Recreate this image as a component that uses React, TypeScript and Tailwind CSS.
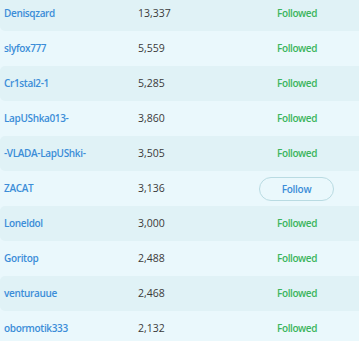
import React from "react";

const rows: { name: string; count: string; followed: boolean }[] = [
  { name: "Denisqzard", count: "13,337", followed: true },
  { name: "slyfox777", count: "5,559", followed: true },
  { name: "Cr1stal2-1", count: "5,285", followed: true },
  { name: "LapUShka013-", count: "3,860", followed: true },
  { name: "-VLADA-LapUShki-", count: "3,505", followed: true },
  { name: "ZACAT", count: "3,136", followed: false },
  { name: "Loneldol", count: "3,000", followed: true },
  { name: "Goritop", count: "2,488", followed: true },
  { name: "venturauue", count: "2,468", followed: true },
  { name: "obormotik333", count: "2,132", followed: true },
];

export default function App() {
  return (
    <div
      className="w-[359px] h-[341px] overflow-hidden bg-[#eaf8fc]"
      style={{ fontFamily: "'Open Sans', sans-serif" }}
    >
      <div className="-mt-[4px] flex flex-col">
        {rows.map((r, i) => (
          <div
            key={r.name}
            className={
              "flex items-center h-[35px] text-[10px] " +
              (i % 2 === 0 ? "bg-[#e0f2f6] rounded-l-[5px] mr-[-6px]" : "")
            }
          >
            <div className="w-[134px] pl-[4px] font-semibold tracking-[-0.35px] text-[#3b8dd8]">{r.name}</div>
            <div className="w-[125px] pl-[4px] text-[10.5px] text-[#3a3a3a]">{r.count}</div>
            <div className="flex-1 flex items-center">
              {r.followed ? (
                <span className="ml-[18px] font-semibold tracking-[-0.4px] text-[#3bb55c]">Followed</span>
              ) : (
                <button className="w-[75px] h-[24px] rounded-full border border-[#b9dbe2] bg-[#eaf8fc] font-semibold tracking-[-0.3px] text-[#3b8dd8] text-[10px] leading-none">
                  Follow
                </button>
              )}
            </div>
          </div>
        ))}
      </div>
    </div>
  );
}
